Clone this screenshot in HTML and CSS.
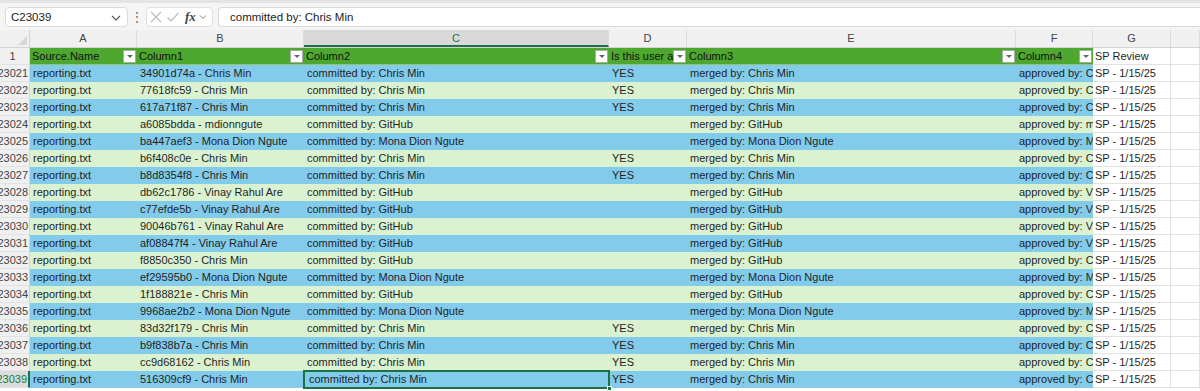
FILE: index.html
```html
<!DOCTYPE html>
<html>
<head>
<meta charset="utf-8">
<link rel="stylesheet" href="styles.css">
</head>
<body>
<div class="topstrip"></div>
<div class="toolbar">
  <div class="namebox">
    <span class="nb-text">C23039</span>
    <svg class="chev" width="10" height="6" viewBox="0 0 10 6"><polyline points="1,1 5,5 9,1" fill="none" stroke="#555" stroke-width="1.2"/></svg>
  </div>
  <div class="dots">⋮</div>
  <div class="fxbox">
    <svg width="14" height="14" viewBox="0 0 14 14"><path d="M2 2 L12 12 M12 2 L2 12" stroke="#b8b8b8" stroke-width="1.1" fill="none"/></svg>
    <svg width="14" height="14" viewBox="0 0 14 14"><path d="M1.5 7.5 L5 11 L12.5 3" stroke="#b8b8b8" stroke-width="1.1" fill="none"/></svg>
    <span class="fx">fx</span>
    <svg width="8" height="6" viewBox="0 0 8 6"><polyline points="1,1.5 4,4.5 7,1.5" fill="none" stroke="#888" stroke-width="1"/></svg>
  </div>
  <div class="formula">committed by: Chris Min</div>
</div>

<div class="sheet">
  <div class="row colhdr">
    <div class="corner"><span class="tri"></span></div>
    <div class="ch">A</div>
    <div class="ch">B</div>
    <div class="ch sel">C</div>
    <div class="ch">D</div>
    <div class="ch">E</div>
    <div class="ch">F</div>
    <div class="ch">G</div>
    <div class="ch"></div>
  </div>

  <div class="row hdr">
    <div class="rh">1</div>
    <div class="th"><span class="tt">Source.Name</span><span class="fb"></span></div>
    <div class="th"><span class="tt">Column1</span><span class="fb"></span></div>
    <div class="th"><span class="tt">Column2</span><span class="fb"></span></div>
    <div class="th"><span class="tt">Is this user an approver</span><span class="fb"></span></div>
    <div class="th"><span class="tt">Column3</span><span class="fb"></span></div>
    <div class="th"><span class="tt">Column4</span><span class="fb"></span></div>
    <div class="g">SP Review</div>
    <div class="g"></div>
  </div>

  <div class="row blue"><div class="rh">23021</div><div class="c">reporting.txt</div><div class="c">34901d74a - Chris Min</div><div class="c">committed by: Chris Min</div><div class="c">YES</div><div class="c">merged by: Chris Min</div><div class="c">approved by: Chris Min</div><div class="g">SP - 1/15/25</div><div class="g"></div></div>
  <div class="row green"><div class="rh">23022</div><div class="c">reporting.txt</div><div class="c">77618fc59 - Chris Min</div><div class="c">committed by: Chris Min</div><div class="c">YES</div><div class="c">merged by: Chris Min</div><div class="c">approved by: Chris Min</div><div class="g">SP - 1/15/25</div><div class="g"></div></div>
  <div class="row blue"><div class="rh">23023</div><div class="c">reporting.txt</div><div class="c">617a71f87 - Chris Min</div><div class="c">committed by: Chris Min</div><div class="c">YES</div><div class="c">merged by: Chris Min</div><div class="c">approved by: Chris Min</div><div class="g">SP - 1/15/25</div><div class="g"></div></div>
  <div class="row green"><div class="rh">23024</div><div class="c">reporting.txt</div><div class="c">a6085bdda - mdionngute</div><div class="c">committed by: GitHub</div><div class="c"></div><div class="c">merged by: GitHub</div><div class="c">approved by: mdionngute</div><div class="g">SP - 1/15/25</div><div class="g"></div></div>
  <div class="row blue"><div class="rh">23025</div><div class="c">reporting.txt</div><div class="c">ba447aef3 - Mona Dion Ngute</div><div class="c">committed by: Mona Dion Ngute</div><div class="c"></div><div class="c">merged by: Mona Dion Ngute</div><div class="c">approved by: Mona Dion Ngute</div><div class="g">SP - 1/15/25</div><div class="g"></div></div>
  <div class="row green"><div class="rh">23026</div><div class="c">reporting.txt</div><div class="c">b6f408c0e - Chris Min</div><div class="c">committed by: Chris Min</div><div class="c">YES</div><div class="c">merged by: Chris Min</div><div class="c">approved by: Chris Min</div><div class="g">SP - 1/15/25</div><div class="g"></div></div>
  <div class="row blue"><div class="rh">23027</div><div class="c">reporting.txt</div><div class="c">b8d8354f8 - Chris Min</div><div class="c">committed by: Chris Min</div><div class="c">YES</div><div class="c">merged by: Chris Min</div><div class="c">approved by: Chris Min</div><div class="g">SP - 1/15/25</div><div class="g"></div></div>
  <div class="row green"><div class="rh">23028</div><div class="c">reporting.txt</div><div class="c">db62c1786 - Vinay Rahul Are</div><div class="c">committed by: GitHub</div><div class="c"></div><div class="c">merged by: GitHub</div><div class="c">approved by: Vinay Rahul Are</div><div class="g">SP - 1/15/25</div><div class="g"></div></div>
  <div class="row blue"><div class="rh">23029</div><div class="c">reporting.txt</div><div class="c">c77efde5b - Vinay Rahul Are</div><div class="c">committed by: GitHub</div><div class="c"></div><div class="c">merged by: GitHub</div><div class="c">approved by: Vinay Rahul Are</div><div class="g">SP - 1/15/25</div><div class="g"></div></div>
  <div class="row green"><div class="rh">23030</div><div class="c">reporting.txt</div><div class="c">90046b761 - Vinay Rahul Are</div><div class="c">committed by: GitHub</div><div class="c"></div><div class="c">merged by: GitHub</div><div class="c">approved by: Vinay Rahul Are</div><div class="g">SP - 1/15/25</div><div class="g"></div></div>
  <div class="row blue"><div class="rh">23031</div><div class="c">reporting.txt</div><div class="c">af08847f4 - Vinay Rahul Are</div><div class="c">committed by: GitHub</div><div class="c"></div><div class="c">merged by: GitHub</div><div class="c">approved by: Vinay Rahul Are</div><div class="g">SP - 1/15/25</div><div class="g"></div></div>
  <div class="row green"><div class="rh">23032</div><div class="c">reporting.txt</div><div class="c">f8850c350 - Chris Min</div><div class="c">committed by: GitHub</div><div class="c"></div><div class="c">merged by: GitHub</div><div class="c">approved by: Chris Min</div><div class="g">SP - 1/15/25</div><div class="g"></div></div>
  <div class="row blue"><div class="rh">23033</div><div class="c">reporting.txt</div><div class="c">ef29595b0 - Mona Dion Ngute</div><div class="c">committed by: Mona Dion Ngute</div><div class="c"></div><div class="c">merged by: Mona Dion Ngute</div><div class="c">approved by: Mona Dion Ngute</div><div class="g">SP - 1/15/25</div><div class="g"></div></div>
  <div class="row green"><div class="rh">23034</div><div class="c">reporting.txt</div><div class="c">1f188821e - Chris Min</div><div class="c">committed by: GitHub</div><div class="c"></div><div class="c">merged by: GitHub</div><div class="c">approved by: Chris Min</div><div class="g">SP - 1/15/25</div><div class="g"></div></div>
  <div class="row blue"><div class="rh">23035</div><div class="c">reporting.txt</div><div class="c">9968ae2b2 - Mona Dion Ngute</div><div class="c">committed by: Mona Dion Ngute</div><div class="c"></div><div class="c">merged by: Mona Dion Ngute</div><div class="c">approved by: Mona Dion Ngute</div><div class="g">SP - 1/15/25</div><div class="g"></div></div>
  <div class="row green"><div class="rh">23036</div><div class="c">reporting.txt</div><div class="c">83d32f179 - Chris Min</div><div class="c">committed by: Chris Min</div><div class="c">YES</div><div class="c">merged by: Chris Min</div><div class="c">approved by: Chris Min</div><div class="g">SP - 1/15/25</div><div class="g"></div></div>
  <div class="row blue"><div class="rh">23037</div><div class="c">reporting.txt</div><div class="c">b9f838b7a - Chris Min</div><div class="c">committed by: Chris Min</div><div class="c">YES</div><div class="c">merged by: Chris Min</div><div class="c">approved by: Chris Min</div><div class="g">SP - 1/15/25</div><div class="g"></div></div>
  <div class="row green"><div class="rh">23038</div><div class="c">reporting.txt</div><div class="c">cc9d68162 - Chris Min</div><div class="c">committed by: Chris Min</div><div class="c">YES</div><div class="c">merged by: Chris Min</div><div class="c">approved by: Chris Min</div><div class="g">SP - 1/15/25</div><div class="g"></div></div>
  <div class="row blue"><div class="rh selrow">23039</div><div class="c">reporting.txt</div><div class="c">516309cf9 - Chris Min</div><div class="c active">committed by: Chris Min<span class="handle"></span></div><div class="c">YES</div><div class="c">merged by: Chris Min</div><div class="c">approved by: Chris Min</div><div class="g">SP - 1/15/25</div><div class="g"></div></div>
</div>
</body>
</html>
```

FILE: styles.css
```css
* { box-sizing: border-box; }
html, body { margin: 0; padding: 0; }
body {
  width: 1200px;
  height: 391px;
  overflow: hidden;
  background: #ffffff;
  font-family: "Liberation Sans", Arial, sans-serif;
  font-size: 11px;
  color: #1f1f1f;
}

.topstrip { height: 3px; background: #e4e4e4; }

.toolbar {
  height: 27px;
  background: #f5f5f5;
  display: flex;
  align-items: flex-start;
  padding: 4px 0 0 5px;
}
.namebox {
  width: 123px;
  height: 20px;
  background: #fff;
  border: 1px solid #dadada;
  border-radius: 4px;
  display: flex;
  align-items: center;
  justify-content: space-between;
  padding: 0 6px 0 5px;
  font-size: 11.5px;
  color: #222;
}
.chev { margin-top: 1px; }
.dots {
  width: 18px;
  text-align: center;
  color: #666;
  font-size: 12px;
  line-height: 20px;
}
.fxbox {
  width: 67px;
  height: 20px;
  background: #fff;
  border: 1px solid #e0e0e0;
  border-radius: 4px;
  display: flex;
  align-items: center;
  gap: 3px;
  padding-left: 2px;
}
.fx {
  font-family: "Liberation Serif", "Times New Roman", serif;
  font-style: italic;
  font-weight: bold;
  font-size: 13px;
  color: #444;
  margin-left: 2px;
}
.formula {
  flex: 1;
  margin-left: 5px;
  height: 20px;
  background: #fff;
  border: 1px solid #dadada;
  border-right: none;
  border-radius: 4px 0 0 4px;
  padding-left: 11px;
  line-height: 18px;
  font-size: 11.5px;
  color: #222;
}

.sheet { display: flex; flex-direction: column; }

.row {
  display: grid;
  grid-template-columns: 30px 107px 167px 305px 78px 329px 77px 78px 29px;
  height: 17px;
}
.row > div {
  overflow: hidden;
  white-space: nowrap;
  line-height: 17px;
}

.colhdr { height: 18px; background: #f0f0f0; border-bottom: 1px solid #d4d4d4; }
.corner { position: relative; border-right: 1px solid #d4d4d4; }
.tri {
  position: absolute;
  right: 2px;
  bottom: 2px;
  width: 0; height: 0;
  border-left: 9px solid transparent;
  border-bottom: 9px solid #d8d8d8;
}
.ch {
  text-align: center;
  color: #444;
  border-right: 1px solid #dcdcdc;
  font-size: 11px;
}
.ch.sel {
  background: #d9d9d9;
  color: #107c41;
  border-bottom: 2px solid #1e7145;
  line-height: 16px !important;
}

.rh {
  background: #f0f0f0;
  border-right: 1px solid #d4d4d4;
  border-bottom: 1px solid #e2e2e2;
  color: #444;
  display: flex;
  justify-content: flex-end;
  padding-right: 1px;
  font-size: 11px;
}
.rh.selrow {
  background: #dcdcdc;
  color: #107c41;
  border-right: 2px solid #1e7145;
}
.hdr .rh { justify-content: center; padding-right: 4px; }

.hdr { height: 17px; }
.th {
  background: #4ea72e;
  color: #111;
  display: flex;
  align-items: center;
  padding-left: 2px;
  border-bottom: 1px solid #8fc47b;
}
.tt { flex: 1; overflow: hidden; white-space: nowrap; }
.fb {
  flex: none;
  width: 13px;
  height: 13px;
  background: #fff;
  border: 1px solid #a8a8a8;
  margin-right: 1px;
  position: relative;
}
.fb::after {
  content: "";
  position: absolute;
  left: 3px;
  top: 4px;
  border-left: 3px solid transparent;
  border-right: 3px solid transparent;
  border-top: 3px solid #666;
}

.c { padding-left: 3px; color: #1f1f1f; }
.blue .c { background: #83cbeb; }
.green .c { background: #daf2d0; }

.g {
  background: #fff;
  border-right: 1px solid #e1e1e1;
  border-bottom: 1px solid #e1e1e1;
  padding-left: 2px;
}

.active {
  position: relative;
  overflow: visible !important;
  outline: 2px solid #1e7145;
  outline-offset: -1px;
  padding-left: 5px !important;
}
.handle {
  position: absolute;
  right: -3px;
  bottom: -3px;
  width: 5px;
  height: 5px;
  background: #1e7145;
  border: 1px solid #fff;
}
```
